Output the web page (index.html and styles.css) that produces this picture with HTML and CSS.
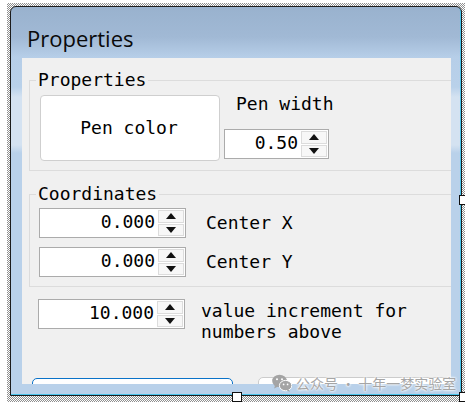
FILE: index.html
```html
<!DOCTYPE html>
<html>
<head>
<meta charset="utf-8">
<link rel="stylesheet" href="styles.css">
</head>
<body>
<div class="sel">
  <div class="window">
    <div class="title">Properties</div>
    <div class="client">
      <fieldset class="group g1">
        <legend>Properties</legend>
        <div class="g1-row">
          <div class="btn pen-color">Pen color</div>
          <div class="pw-col">
            <div class="lbl pw-lbl">Pen width</div>
            <div class="spin spin-sm"><span class="val">0.50</span><span class="arrows"><span class="arr"><i class="tri up"></i></span><span class="arr"><i class="tri down"></i></span></span></div>
          </div>
        </div>
      </fieldset>
      <fieldset class="group g2">
        <legend>Coordinates</legend>
        <div class="g2-body">
          <div class="row">
            <div class="spin"><span class="val">0.000</span><span class="arrows"><span class="arr"><i class="tri up"></i></span><span class="arr"><i class="tri down"></i></span></span></div>
            <div class="lbl coord-lbl">Center X</div>
          </div>
          <div class="row">
            <div class="spin"><span class="val">0.000</span><span class="arrows"><span class="arr"><i class="tri up"></i></span><span class="arr"><i class="tri down"></i></span></span></div>
            <div class="lbl coord-lbl">Center Y</div>
          </div>
        </div>
      </fieldset>
      <div class="inc-row">
        <div class="spin"><span class="val">10.000</span><span class="arrows"><span class="arr"><i class="tri up"></i></span><span class="arr"><i class="tri down"></i></span></span></div>
        <div class="lbl inc-lbl">value increment for<br>numbers above</div>
      </div>
      <div class="btn-row">
        <div class="btn bottom-btn primary"></div>
        <div class="btn bottom-btn secondary"></div>
      </div>
    </div>
  </div>
</div>
<div class="handle h-right"></div>
<div class="handle h-bottom"></div>
<div class="handle h-corner"></div>
<div class="watermark">
  <svg class="wm-icon" width="20" height="18" viewBox="0 0 20 18">
    <ellipse cx="7.5" cy="7" rx="7.3" ry="6.2" fill="#a4a4a4"/>
    <path d="M3 11.5 L2.2 14.6 L6 12.6 Z" fill="#a4a4a4"/>
    <circle cx="5" cy="5.2" r="1" fill="#fff"/>
    <circle cx="10" cy="5.2" r="1" fill="#fff"/>
    <ellipse cx="13.6" cy="11.6" rx="6.2" ry="5.2" fill="#a4a4a4" stroke="#fff" stroke-width="1"/>
    <path d="M16.8 15.5 L17.8 17.8 L14.6 16.4 Z" fill="#a4a4a4"/>
    <circle cx="11.6" cy="10.4" r="0.85" fill="#fff"/>
    <circle cx="15.6" cy="10.4" r="0.85" fill="#fff"/>
  </svg>
  <span class="wm-text">公众号 · 十年一梦实验室</span>
</div>
</body>
</html>
```
FILE: styles.css
```css
* { box-sizing: border-box; }

html, body {
  margin: 0;
  padding: 0;
  background: #ffffff;
  overflow: hidden;
}

.sel {
  margin: 3px 0 0 7px;
  width: 458px;
  height: 399px;
  padding: 3px;
  background: repeating-conic-gradient(#8f8f8f 0 25%, #ffffff 0 50%) 0 0 / 2px 2px;
}

.window {
  width: 452px;
  height: 390px;
  border: 1px solid #1c1c1c;
  border-radius: 6px 6px 0 0;
  box-shadow: inset -1px -1px 0 #49c3ea;
  background: linear-gradient(to bottom,
    #99b2ce 0px, #a1b9d5 30px, #b6cee8 50px, #b9d1ea 80px,
    #d4e2f1 90px, #d4e2f1 138px, #b9d1ea 146px, #b9d1ea 100%);
  display: flex;
  flex-direction: column;
  padding: 0 10px 10px 11px;
}

.title {
  height: 51px;
  flex-shrink: 0;
  padding: 16px 0 0 5px;
  font-family: "Open Sans", "Noto Sans", sans-serif;
  font-size: 22px;
  line-height: 30px;
  color: #0a0a0a;
}

.client {
  height: 326px;
  flex-shrink: 0;
  background: #f0f0f0;
  overflow: hidden;
  display: flex;
  flex-direction: column;
  font-family: "DejaVu Sans Mono", "Liberation Mono", monospace;
  font-size: 18px;
  line-height: 20px;
  color: #000;
}

.client > * { flex-shrink: 0; }

.group {
  border: 1px solid #dcdcdc;
  border-right: none;
  margin: 0 0 0 7px;
  padding: 0;
  min-width: 0;
}

.group legend {
  margin-left: 6px;
  padding: 0 2px;
  line-height: 20px;
}

.g1 {
  margin-top: 12px;
  padding: 5px 0 9px 0;
}

.g1-row {
  margin-left: 10px;
  display: flex;
  align-items: flex-start;
}

.btn {
  background: #ffffff;
  border: 1px solid #cfcfcf;
  border-radius: 4px;
}

.pen-color {
  width: 180px;
  height: 66px;
  display: flex;
  align-items: center;
  justify-content: center;
  padding-right: 2px;
}

.pw-col {
  margin-left: 4px;
  display: flex;
  flex-direction: column;
}

.pw-lbl {
  margin-left: 12px;
  height: 20px;
  margin-top: -1px;
}

.spin {
  width: 147px;
  height: 30px;
  border: 1px solid #ababab;
  background: #ffffff;
  display: flex;
  align-items: stretch;
  padding: 1px 1px 1px 0;
}

.spin-sm {
  width: 105px;
  margin-top: 15px;
}

.val {
  flex: 1;
  text-align: right;
  padding-right: 3px;
  align-self: center;
  margin-top: -2px;
}

.arrows {
  width: 26px;
  display: flex;
  flex-direction: column;
  gap: 1px;
}

.arr {
  flex: 1;
  background: #f7f7f7;
  border: 1px solid #dcdcdc;
  display: flex;
  align-items: center;
  justify-content: center;
}

.tri {
  width: 0;
  height: 0;
  border-left: 5px solid transparent;
  border-right: 5px solid transparent;
}

.tri.up { border-bottom: 6px solid #111; }
.tri.down { border-top: 6px solid #111; }

.g2 {
  margin-top: 13px;
  padding: 4px 0 9px 0;
}

.g2-body {
  margin-left: 9px;
  display: flex;
  flex-direction: column;
  gap: 9px;
}

.row {
  display: flex;
  align-items: center;
}

.coord-lbl {
  margin-left: 20px;
}

.inc-row {
  margin: 12px 0 0 16px;
  display: flex;
  align-items: flex-start;
}

.inc-lbl {
  margin: 1px 0 0 16px;
  line-height: 21px;
}

.btn-row {
  margin-top: 36px;
  display: flex;
  align-items: flex-start;
}

.bottom-btn {
  height: 30px;
  border-radius: 5px;
}

.primary {
  margin-left: 10px;
  width: 208px;
  border-color: #0a72c8;
}

.secondary {
  margin-left: 25px;
  margin-top: -1px;
  width: 200px;
  border-color: #cccccc;
}

.handle {
  position: absolute;
  width: 10px;
  height: 10px;
  background: #ffffff;
  border: 1px solid #111;
}

.h-right { left: 459px; top: 195px; }
.h-bottom { left: 232px; top: 392px; }
.h-corner { left: 459px; top: 392px; }

.watermark {
  position: absolute;
  left: 272px;
  top: 373px;
  display: flex;
  align-items: center;
  gap: 4px;
  white-space: nowrap;
}

.wm-icon { display: block; flex-shrink: 0; }

.wm-text {
  font-family: "Noto Sans CJK SC", sans-serif;
  font-size: 14px;
  line-height: 20px;
  color: #a6a6a6;
  text-shadow: 0 0 2px #ffffff, 0 0 2px #ffffff, 0 0 3px #ffffff;
}
```
